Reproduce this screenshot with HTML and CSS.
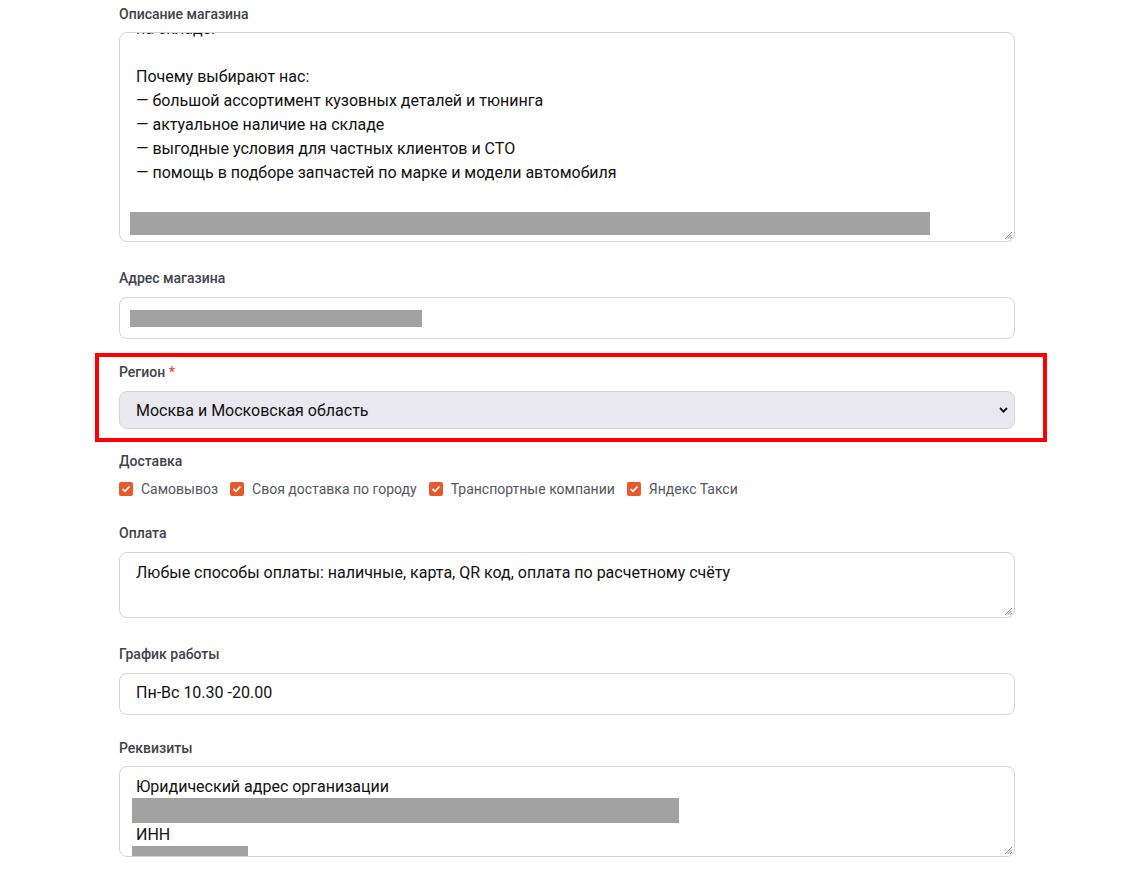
FILE: index.html
```html
<!DOCTYPE html>
<html lang="ru">
<head>
<meta charset="utf-8">
<title>Магазин</title>
<link rel="stylesheet" href="styles.css">
</head>
<body>
<main class="page">
  <div class="group g-desc">
    <div class="label">Описание магазина</div>
    <div class="area area-desc">
      <div class="scroll">
        <div class="line">на складе.</div>
        <div class="line">&nbsp;</div>
        <div class="line">Почему выбирают нас:</div>
        <div class="line">— большой ассортимент кузовных деталей и тюнинга</div>
        <div class="line">— актуальное наличие на складе</div>
        <div class="line">— выгодные условия для частных клиентов и СТО</div>
        <div class="line">— помощь в подборе запчастей по марке и модели автомобиля</div>
        <div class="line">&nbsp;</div>
        <div class="redact redact-desc"></div>
      </div>
      <svg class="grip" width="10" height="10" viewBox="0 0 10 10"><path d="M9 2 L2 9 M9 4.5 L4.5 9 M9 7 L7 9" stroke="#8a8a90" stroke-width="1"/></svg>
    </div>
  </div>

  <div class="group g-addr">
    <div class="label">Адрес магазина</div>
    <div class="input"><div class="redact redact-addr"></div></div>
  </div>

  <div class="highlight">
    <div class="label">Регион <span class="req">*</span></div>
    <div class="select">
      <span>Москва и Московская область</span>
      <svg class="chev" width="9" height="6" viewBox="0 0 9 6"><path d="M1 1 L4.5 4.6 L8 1" fill="none" stroke="#111" stroke-width="1.8"/></svg>
    </div>
  </div>

  <div class="group g-deliv">
    <div class="label">Доставка</div>
    <div class="checks">
      <label class="check"><span class="box"><svg width="10" height="8" viewBox="0 0 10 8"><path d="M1.5 4 L4 6.3 L8.5 1.5" fill="none" stroke="#fff" stroke-width="1.8"/></svg></span>Самовывоз</label>
      <label class="check"><span class="box"><svg width="10" height="8" viewBox="0 0 10 8"><path d="M1.5 4 L4 6.3 L8.5 1.5" fill="none" stroke="#fff" stroke-width="1.8"/></svg></span>Своя доставка по городу</label>
      <label class="check"><span class="box"><svg width="10" height="8" viewBox="0 0 10 8"><path d="M1.5 4 L4 6.3 L8.5 1.5" fill="none" stroke="#fff" stroke-width="1.8"/></svg></span>Транспортные компании</label>
      <label class="check"><span class="box"><svg width="10" height="8" viewBox="0 0 10 8"><path d="M1.5 4 L4 6.3 L8.5 1.5" fill="none" stroke="#fff" stroke-width="1.8"/></svg></span>Яндекс Такси</label>
    </div>
  </div>

  <div class="group g-pay">
    <div class="label">Оплата</div>
    <div class="area area-pay">
      <div class="line">Любые способы оплаты: наличные, карта, QR код, оплата по расчетному счёту</div>
      <svg class="grip" width="10" height="10" viewBox="0 0 10 10"><path d="M9 2 L2 9 M9 4.5 L4.5 9 M9 7 L7 9" stroke="#8a8a90" stroke-width="1"/></svg>
    </div>
  </div>

  <div class="group g-hours">
    <div class="label">График работы</div>
    <div class="input"><div class="line">Пн-Вс 10.30 -20.00</div></div>
  </div>

  <div class="group g-req">
    <div class="label">Реквизиты</div>
    <div class="area area-req">
      <div class="line">Юридический адрес организации</div>
      <div class="redact redact-req1"></div>
      <div class="line">ИНН</div>
      <div class="redact redact-req2"></div>
      <svg class="grip" width="10" height="10" viewBox="0 0 10 10"><path d="M9 2 L2 9 M9 4.5 L4.5 9 M9 7 L7 9" stroke="#8a8a90" stroke-width="1"/></svg>
    </div>
  </div>
</main>
</body>
</html>
```

FILE: styles.css
```css
* { box-sizing: border-box; }
html, body { margin: 0; padding: 0; background: #fff; }
body {
  font-family: Roboto, "Noto Sans", "Liberation Sans", sans-serif;
  color: #111;
  height: 872px;
  overflow: hidden;
}
.page {
  padding: 4px 117px 0 119px;
  display: flex;
  flex-direction: column;
}
.label {
  font-size: 14px;
  line-height: 20px;
  font-weight: 500;
  color: #42424c;
  margin-bottom: 9px;
}
.g-desc .label, .g-req .label, .g-deliv .label { margin-bottom: 8px; }
.req { color: #f0443a; }
.line {
  font-size: 16px;
  line-height: 24px;
  white-space: nowrap;
}
.area, .input, .select {
  border: 1px solid #d3d3da;
  border-radius: 8px;
  background: #fff;
  position: relative;
  overflow: hidden;
}
.area { padding: 8px 16px; }
.area-desc { height: 210px; padding: 0 16px; }
.scroll { margin-top: -16px; }
.area-pay { height: 66px; }
.area-req { height: 91px; }
.input { height: 42px; padding: 7px 16px 9px; }
.redact { background: #a2a2a2; }
.redact-desc { width: 800px; height: 23px; margin: 3px 0 0 -6px; }
.redact-addr { width: 292px; height: 17px; margin: 5px 0 0 -6px; }
.redact-req1 { width: 547px; height: 25px; margin: -1px 0 0 -4px; }
.redact-req2 { width: 116px; height: 20px; margin: -1px 0 0 -4px; }
.grip { position: absolute; right: 1px; bottom: 1px; }

.g-addr { margin-top: 26px; }
.highlight {
  border: 4px solid #ff0000;
  margin: 14px -32px 0 -24px;
  padding: 5px 28px 9px 20px;
}
.select {
  height: 38px;
  background: #e8e8ee;
  display: flex;
  align-items: center;
  justify-content: space-between;
  padding: 0 6px 0 16px;
  font-size: 16px;
}
.chev { display: block; }
.g-deliv { margin-top: 9px; }
.checks {
  display: flex;
  gap: 12px;
  height: 20px;
  align-items: center;
}
.check {
  display: flex;
  align-items: center;
  gap: 8px;
  font-size: 14px;
  color: #56565e;
}
.box {
  width: 14px;
  height: 14px;
  border-radius: 2px;
  background: #e9582a;
  display: flex;
  align-items: center;
  justify-content: center;
}
.box svg { display: block; }
.g-pay { margin-top: 24px; }
.g-hours { margin-top: 26px; }
.g-req { margin-top: 23px; }
```
